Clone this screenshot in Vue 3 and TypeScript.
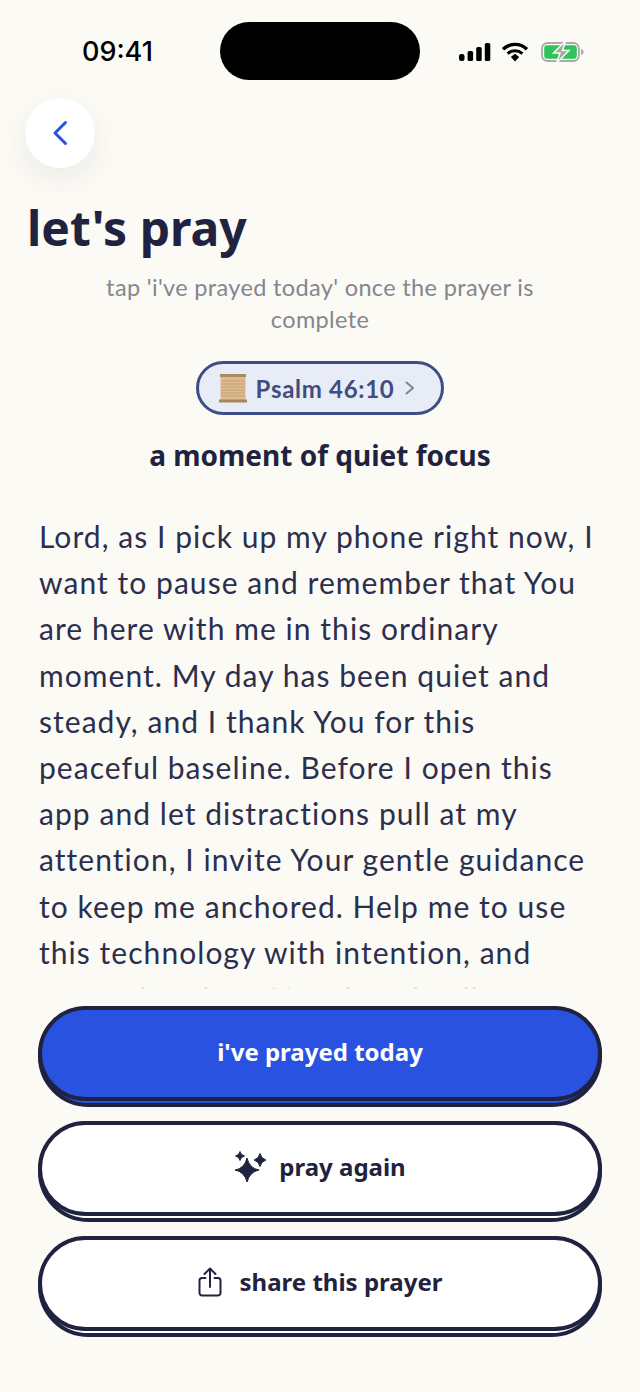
<script setup lang="ts">
const prayerLines: string[] = [
  'Lord, as I pick up my phone right now, I',
  'want to pause and remember that You',
  'are here with me in this ordinary',
  'moment. My day has been quiet and',
  'steady, and I thank You for this',
  'peaceful baseline. Before I open this',
  'app and let distractions pull at my',
  'attention, I invite Your gentle guidance',
  'to keep me anchored. Help me to use',
  'this technology with intention, and',
  'so my days bear Your love in all',
]
</script>

<template>
  <div class="screen">
    <div class="status">
      <span class="time">09:41</span>
      <div class="island"></div>
      <div class="sys">
        <svg width="32" height="20" viewBox="0 0 32 20"><rect x="0" y="12" width="5.5" height="7" rx="2.2"/><rect x="8.6" y="9" width="5.5" height="10" rx="1.6"/><rect x="17.2" y="5" width="5.5" height="14" rx="1.6"/><rect x="25.8" y="1" width="5.500" height="18" rx="1.6"/></svg>
        <svg width="28" height="20" viewBox="0 0 28 20"><path d="M2 7.2C9 .8 19 .8 26 7.2" fill="none" stroke="#000" stroke-width="3.4"/><path d="M6.6 11.6c4.4-3.8 10.400-3.800 14.800 0" fill="none" stroke="#000" stroke-width="3.2"/><path d="M9.800 15l4.200-3.200 4.200 3.200L14 19.600z"/></svg>
        <svg class="batt" width="44" height="24" viewBox="0 0 44 24"><rect x="1" y="3" width="37" height="18" rx="5.500" fill="none" stroke="#a9aaa6" stroke-width="1.800"/><rect x="3.200" y="5.200" width="32.600" height="13.600" rx="3" fill="#2fc35c"/><path d="M40 9v6c1.800-.4 2.600-1.600 2.600-3s-.8-2.600-2.600-3z" fill="#a9aaa6"/><path d="M24.500 1L12.500 13h6.500L15.500 23 28 10.500h-6.500z" fill="#a2a6a0" stroke="#fbfaf4" stroke-width="1.500"/></svg>
      </div>
    </div>

    <div class="back">
      <svg width="18" height="26" viewBox="0 0 18 26"><path d="M14.500 2.500L4 13l10.500 10.500" fill="none" stroke="#2a52e0" stroke-width="3" stroke-linecap="round" stroke-linejoin="round"/></svg>
    </div>

    <h1 class="title">let's pray</h1>
    <p class="sub">tap 'i've prayed today' once the prayer is complete</p>

    <div class="pill-row">
      <div class="pill">
        <svg width="30" height="32" viewBox="0 0 30 32">
          <rect x="2.500" y="3" width="25" height="26" fill="#dcbb8f"/>
          <rect x="2" y="2" width="26" height="3" fill="#a98a63"/>
          <rect x="1" y="27.500" width="28" height="3" fill="#a8855a"/>
          <path d="M3 9h24M3 12h24M3 15h24M3 18h24M3 21h24M3 24h24" stroke="#c4a273" stroke-width="1"/>
        </svg>
        <span class="pill-text">Psalm 46:10</span>
        <svg class="chev" width="12" height="16" viewBox="0 0 12 16"><path d="M2.500 2.500L9 8l-6.500 5.500" fill="none" stroke="#7f8296" stroke-width="2" stroke-linecap="round" stroke-linejoin="round"/></svg>
      </div>
    </div>

    <h2 class="focus">a moment of quiet focus</h2>

    <div class="prayer">
      <div v-for="line in prayerLines" :key="line" class="line">{{ line }}</div>
      <div class="fade"></div>
    </div>

    <div class="actions">
      <div class="btn-back blue"><button class="btn primary">i've prayed today</button></div>
      <div class="btn-back"><button class="btn again">
        <svg width="34" height="34" viewBox="0 0 34 34" fill="#1f2340" stroke="#1f2340" stroke-linejoin="round"><path d="M13 8Q15.500 18.500 25 20 15.500 22 13 32 10.500 22 1 20 10.500 18.500 13 8z"/><path d="M26 3.500Q27 8.500 32 10 27 11.500 26 16.500 25 11.500 20 10 25 8.500 26 3.500z"/><path d="M6 1.500Q6.700 5 10.500 6 6.700 7 6 10.500 5.300 7 1.500 6 5.300 5 6 1.500z"/></svg>
        <span>pray again</span>
      </button></div>
      <div class="btn-back"><button class="btn share">
        <svg width="24" height="30" viewBox="0 0 24 30" fill="none" stroke="#1f2340" stroke-width="2" stroke-linecap="round" stroke-linejoin="round"><path d="M7.500 11H4a2.500 2.500 0 0 0-2.500 2.500V26A2.500 2.500 0 0 0 4 28.500h16a2.500 2.500 0 0 0 2.500-2.500V13.500A2.500 2.500 0 0 0 20 11h-3.500"/><path d="M12 20V2M6.500 7L12 1.500 17.500 7"/></svg>
        <span>share this prayer</span>
      </button></div>
    </div>
  </div>
</template>

<style>
html, body { margin: 0; background: #fbfaf4; }
</style>

<style scoped>
.screen {
  width: 640px;
  height: 1392px;
  overflow: hidden;
  background: #fbfaf4;
  color: #1f2340;
  font-family: "Lato", "Noto Sans", sans-serif;
  box-sizing: border-box;
}
.status {
  height: 98px;
  display: grid;
  grid-template-columns: 220px 200px 220px;
  align-items: start;
}
.time {
  font: 500 27px/30px "Inter", "Liberation Sans", sans-serif;
  color: #000;
  padding: 37px 0 0 82px;
}
.island {
  margin-top: 22px;
  height: 58px;
  border-radius: 29px;
  background: #000;
}
.sys {
  display: flex;
  align-items: center;
  gap: 10px;
  padding: 40px 0 0 39px;
}
.batt {
  margin-left: 2px;
}
.back {
  width: 70px;
  height: 70px;
  margin-left: 25px;
  border-radius: 50%;
  background: #fff;
  box-shadow: 0 10px 30px rgba(30, 35, 70, 0.07);
  display: flex;
  align-items: center;
  justify-content: center;
}
.title {
  margin: 30px 0 0 27px;
  font: 700 48px/60px "Noto Sans", sans-serif;
  color: #1f2340;
}
.sub {
  width: 460px;
  margin: 13px auto 0;
  text-align: center;
  font-size: 23.5px;
  letter-spacing: 0.35px;
  line-height: 32px;
  color: #84868f;
}
.pill-row {
  display: flex;
  justify-content: center;
  margin-top: 26px;
}
.pill {
  box-sizing: border-box;
  width: 248px;
  height: 54px;
  padding-right: 6px;
  border: 3px solid #3f4d86;
  border-radius: 27px;
  background: #e8ecf6;
  display: flex;
  align-items: center;
  justify-content: center;
  gap: 8px;
}
.pill-text {
  font-size: 24px;
  font-weight: 700;
  letter-spacing: 0.7px;
  color: #3f4d80;
}
.chev {
  margin-left: 2px;
}
.focus {
  margin: 20px 0 0;
  text-align: center;
  font: 700 28px/40px "Noto Sans", sans-serif;
  color: #1f2340;
}
.prayer {
  position: relative;
  margin: 38px 0 0 39px;
  height: 476px;
  overflow: hidden;
  font-size: 30px;
  letter-spacing: 1.05px;
  line-height: 46.2px;
  color: #2b2f4d;
  white-space: nowrap;
}
.fade {
  position: absolute;
  left: 0;
  right: 0;
  bottom: 0;
  height: 10px;
  background: rgba(251, 250, 244, 0.88);
}
.actions {
  margin: 17px 38px 0;
  display: flex;
  flex-direction: column;
  gap: 14px;
}
.btn-back {
  box-sizing: border-box;
  height: 101px;
  border: 4px solid #1f2340;
  border-radius: 51px;
  background: #fff;
}
.btn-back.blue {
  background: #2a52e0;
}
.btn {
  box-sizing: border-box;
  display: flex;
  align-items: center;
  justify-content: center;
  gap: 13px;
  width: calc(100% + 8px);
  height: 95px;
  margin: -4px;
  padding: 0 0 4px;
  border: 4px solid #1f2340;
  border-radius: 48px;
  background: #fff;
  color: #1f2340;
  font: 700 24px/1 "Noto Sans", sans-serif;
}
.btn.again {
  gap: 11px;
}
.btn.share {
  gap: 18px;
}
.btn.primary {
  background: #2a52e0;
  color: #fff;
}
</style>
